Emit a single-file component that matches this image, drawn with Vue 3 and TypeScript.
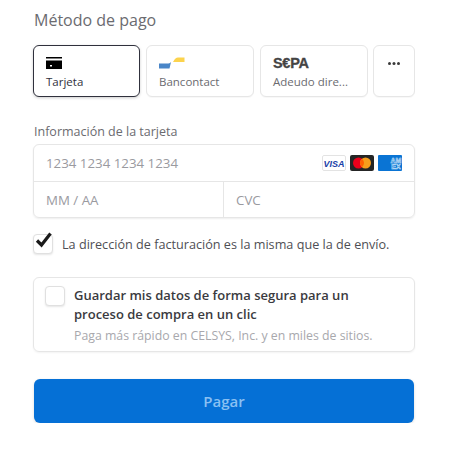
<script setup lang="ts">
interface Tab { label: string; kind: string; active?: boolean }
const tabs: Tab[] = [
  { label: 'Tarjeta', kind: 'card', active: true },
  { label: 'Bancontact', kind: 'ban' },
  { label: 'Adeudo dire...', kind: 'sepa' },
]
</script>

<template>
  <main class="page">
    <h1 class="title">Método de pago</h1>
    <div class="tabs">
      <div v-for="t in tabs" :key="t.label" class="tab" :class="{ active: t.active }">
        <div class="icon">
          <svg v-if="t.kind === 'card'" width="16" height="12" viewBox="0 0 16 12">
            <rect x="0" y="0" width="16" height="1.500" fill="#000" />
            <rect x="0" y="3.500" width="16" height="8.500" fill="#000" />
            <rect x="4" y="8" width="2" height="1.500" fill="#fff" />
          </svg>
          <svg v-else-if="t.kind === 'ban'" width="26" height="12" viewBox="0 0 26 12">
            <path d="M0 6.500 H8 C10 6.500 11 6 12 5 L10.500 11.500 H0 Z" fill="#4a86c8" />
            <path d="M14 5 C16 1.500 17 .5 19 .5 H25.500 V5 Z" fill="#fcd34d" />
          </svg>
          <span v-else class="sepa">S€PA</span>
        </div>
        <span class="tab-label">{{ t.label }}</span>
      </div>
      <div class="tab more">
        <svg width="12" height="4" viewBox="0 0 12 4" fill="#3a3a3a">
          <rect x="0" y="0" width="3" height="3" rx="1.500" />
          <rect x="4.500" y="0" width="3" height="3" rx="1.500" />
          <rect x="9" y="0" width="3" height="3" rx="1.500" />
        </svg>
      </div>
    </div>

    <label class="field-label">Información de la tarjeta</label>
    <div class="card-box">
      <div class="row number">
        <span class="ph">1234 1234 1234 1234</span>
        <div class="brands">
          <svg width="24" height="16" viewBox="0 0 24 16">
            <rect x=".5" y=".5" width="23" height="15" rx="1.500" fill="#fff" stroke="#e3e3e3" />
            <text x="12" y="11.500" text-anchor="middle" class="visa">VISA</text>
          </svg>
          <svg width="24" height="16" viewBox="0 0 24 16">
            <rect width="24" height="16" rx="2" fill="#252525" />
            <circle cx="8.500" cy="8" r="5.500" fill="#eb001b" />
            <circle cx="15.500" cy="8" r="5.500" fill="#f79e1b" />
            <path d="M12 3.750 a5.500 5.500 0 0 1 0 8.500 a5.500 5.500 0 0 1 0-8.500" fill="#ff5f00" />
          </svg>
          <svg width="24" height="16" viewBox="0 0 24 16">
            <rect width="24" height="16" rx="1" fill="#0a74d4" />
            <text x="18" y="7.500" text-anchor="middle" class="amex">AM</text>
            <text x="18" y="14" text-anchor="middle" class="amex">EX</text>
          </svg>
        </div>
      </div>
      <div class="row split">
        <div class="cell exp"><span class="ph">MM / AA</span></div>
        <div class="cell cvc"><span class="ph">CVC</span></div>
      </div>
    </div>

    <div class="billing">
      <span class="box checked">
        <svg class="tick" width="20" height="18" viewBox="0 0 20 18">
          <path d="M3 9.500 L7.500 14 L16.500 2.500" fill="none" stroke="#1a1a1a" stroke-width="3.200" />
        </svg>
      </span>
      <span class="billing-text">La dirección de facturación es la misma que la de envío.</span>
    </div>

    <div class="save">
      <span class="box"></span>
      <div class="save-body">
        <div class="save-title">Guardar mis datos de forma segura para un proceso de compra en un clic</div>
        <div class="save-sub">Paga más rápido en CELSYS, Inc. y en miles de sitios.</div>
      </div>
    </div>

    <button class="pay" type="button"><span>Pagar</span></button>
  </main>
</template>

<style scoped>
.page {
  width: 382px;
  margin-left: 33px;
  font-family: "Open Sans", "Noto Sans", sans-serif;
  color: #30313d;
  display: flex;
  flex-direction: column;
}
.title {
  margin: 10px 0 0 1px;
  height: 35px;
  font-size: 16px;
  line-height: 20px;
  font-weight: 400;
  color: #6b6b70;
}
.tabs {
  display: flex;
  gap: 6px;
}
.tab {
  width: 108px;
  height: 52px;
  box-sizing: border-box;
  border: 1px solid #e6e6e6;
  border-radius: 6px;
  padding: 9px 12px 0;
  background: #fff;
  box-shadow: 0 1px 1px rgba(0, 0, 0, .03);
  color: #6b6b70;
}
.tab.active {
  width: 107px;
  border-color: #30313d;
  color: #30313d;
  box-shadow: 0 1px 3px rgba(0, 0, 0, .2);
}
.tab.more {
  width: 42px;
  margin-left: -1px;
  padding: 0 0 0 14px;
  display: flex;
  align-items: flex-start;
  padding-top: 16px;
}
.icon {
  height: 16px;
  display: flex;
  align-items: center;
}
.sepa {
  font-family: "Liberation Sans", sans-serif;
  font-weight: 700;
  font-size: 14.500px;
  letter-spacing: -.3px;
  color: #444;
  -webkit-text-stroke: .3px #444;
}
.tab-label {
  display: block;
  font-size: 11.500px;
  line-height: 16px;
  margin-top: 3px;
  white-space: nowrap;
}
.field-label {
  margin: 26px 0 0 1px;
  font-size: 12.500px;
  line-height: 17px;
  height: 21px;
  color: #6b6b70;
}
.card-box {
  border: 1px solid #e6e6e6;
  border-radius: 6px;
  box-shadow: 0 1px 2px rgba(0, 0, 0, .07);
}
.row {
  height: 36px;
  display: flex;
  align-items: center;
}
.number {
  justify-content: space-between;
  padding: 0 12px;
  border-bottom: 1px solid #e6e6e6;
}
.split {
  height: 35px;
}
.cell {
  height: 100%;
  display: flex;
  align-items: center;
  padding-left: 12px;
  box-sizing: border-box;
}
.exp {
  width: 190px;
  border-right: 1px solid #e6e6e6;
}
.ph {
  font-size: 13.300px;
  color: #9a9a9f;
}
.brands {
  display: flex;
  gap: 4px;
}
.visa {
  font-family: "Liberation Sans", sans-serif;
  font-size: 9px;
  font-weight: 700;
  font-style: italic;
  fill: #1a3fa8;
}
.amex {
  font-family: "Liberation Sans", sans-serif;
  font-size: 7px;
  font-weight: 700;
  fill: #0a74d4;
  stroke: #cfe6f9;
  stroke-width: .5px;
}
.billing {
  margin-top: 16px;
  display: flex;
  align-items: center;
  gap: 9px;
}
.box {
  flex: none;
  position: relative;
  display: block;
  width: 18px;
  height: 18px;
  border: 1px solid #e0e0e0;
  border-radius: 4px;
  background: #fff;
  box-shadow: 0 1px 2px rgba(0, 0, 0, .1);
}
.tick {
  position: absolute;
  left: 0;
  top: -4px;
}
.billing-text {
  font-size: 12.650px;
  line-height: 20px;
  color: #4f4f55;
  white-space: nowrap;
}
.save {
  margin-top: 23px;
  height: 75px;
  box-sizing: border-box;
  border: 1px solid #e6e6e6;
  border-radius: 6px;
  padding: 8px 11px;
  display: flex;
  gap: 9px;
  box-shadow: 0 1px 2px rgba(0, 0, 0, .05);
}
.save-body {
  flex: 1;
}
.save-title {
  max-width: 290px;
  font-size: 13px;
  line-height: 19px;
  font-weight: 600;
  color: #3a3a40;
}
.save-sub {
  margin-top: 4px;
  font-size: 12.300px;
  line-height: 16px;
  color: #a8a8ad;
  white-space: nowrap;
}
.pay {
  margin: 27px 0 0 1px;
  width: 380px;
  height: 44px;
  border: 0;
  border-radius: 6px;
  background: #0570d6;
  box-shadow: 0 1px 3px rgba(0, 0, 0, .15);
  font: 600 15px "Open Sans", sans-serif;
  color: #8ac0f2;
}
</style>
